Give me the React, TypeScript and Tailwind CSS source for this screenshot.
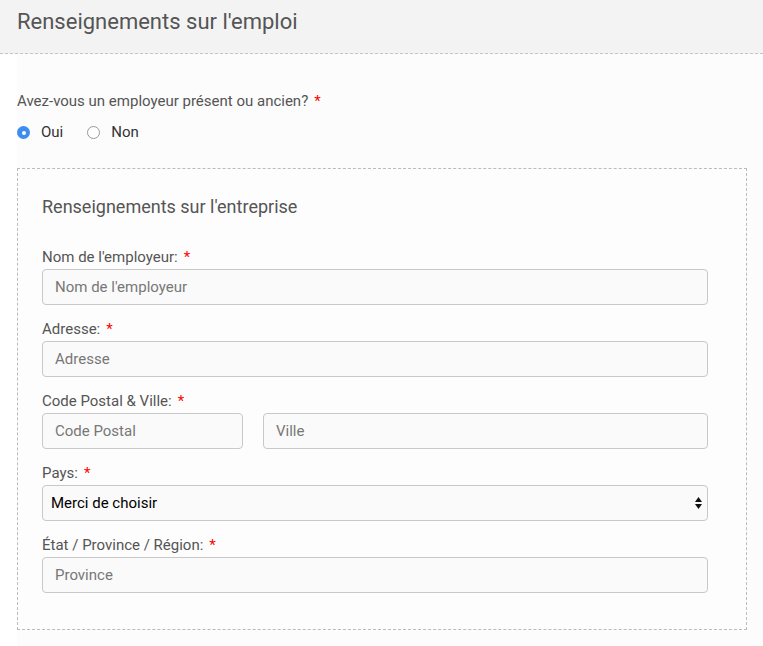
import { useState } from 'react'

const fieldCls =
  'w-full h-[36px] rounded-[4px] border border-[#c8c8c8] bg-[#fafafa] px-3 text-[15px] text-[#333] placeholder:text-[#777] focus:outline-none'

function Label({ text }: { text: string }) {
  return (
    <label className="block text-[15px] leading-[17px] text-[#555] mb-[3px]">
      {text}
      <span className="text-[#ff0000] ml-[6px]">*</span>
    </label>
  )
}

function Radio({ checked, label, onClick }: { checked: boolean; label: string; onClick: () => void }) {
  return (
    <button type="button" onClick={onClick} className="flex items-center gap-[11px] text-[15px] text-[#333]">
      {checked ? (
        <span className="w-[13px] h-[13px] rounded-full bg-[#3b8ef0] flex items-center justify-center">
          <span className="w-[4px] h-[4px] rounded-full bg-white" />
        </span>
      ) : (
        <span className="w-[13px] h-[13px] rounded-full border border-[#999] bg-white" />
      )}
      {label}
    </button>
  )
}

export default function App() {
  const [hasEmployer, setHasEmployer] = useState(true)

  return (
    <div className="min-h-[646px] bg-white" style={{ fontFamily: 'Roboto, "Liberation Sans", sans-serif' }}>
      <div className="h-[54px] bg-[#f3f3f3] border-b border-dashed border-[#c4c4c4] pl-[17px] pt-[9px]">
        <h1 className="text-[22px] leading-[26px] text-[#555]">Renseignements sur l'emploi</h1>
      </div>

      <div className="ml-[17px] bg-[#fcfcfc] pt-[39px] pb-[20px] pr-[16px]">
        <p className="text-[15px] leading-[17px] text-[#555]">
          Avez-vous un employeur présent ou ancien?
          <span className="text-[#ff0000] ml-[6px]">*</span>
        </p>
        <div className="flex items-center gap-[24px] mt-[14px] h-[17px]">
          <Radio checked={hasEmployer} label="Oui" onClick={() => setHasEmployer(true)} />
          <Radio checked={!hasEmployer} label="Non" onClick={() => setHasEmployer(false)} />
        </div>

        <div className="mt-[27px] border border-dashed border-[#bbb] bg-[#fdfdfd] pl-[24px] pr-[38px] pt-[26px] pb-[36px]">
          <h2 className="text-[18px] leading-[24px] text-[#555] mb-[30px]">Renseignements sur l'entreprise</h2>

          <div className="flex flex-col gap-[16px]">
            <div>
              <Label text="Nom de l'employeur:" />
              <input className={fieldCls} placeholder="Nom de l'employeur" />
            </div>
            <div>
              <Label text="Adresse:" />
              <input className={fieldCls} placeholder="Adresse" />
            </div>
            <div>
              <Label text="Code Postal & Ville:" />
              <div className="flex gap-[20px]">
                <input className={`${fieldCls} !w-[201px] shrink-0`} placeholder="Code Postal" />
                <input className={`${fieldCls} flex-1`} placeholder="Ville" />
              </div>
            </div>
            <div>
              <Label text="Pays:" />
              <div className="relative">
                <select className={`${fieldCls} appearance-none !text-black !pl-[8px]`} defaultValue="">
                  <option value="">Merci de choisir</option>
                  <option value="ca">Canada</option>
                  <option value="fr">France</option>
                </select>
                <svg
                  className="absolute right-[5px] top-[11px] pointer-events-none"
                  width="9"
                  height="14"
                  viewBox="0 0 9 14"
                >
                  <path d="M4.5 1 L8 6 L1 6 Z" fill="#111" />
                  <path d="M1 8 L8 8 L4.5 13 Z" fill="#111" />
                </svg>
              </div>
            </div>
            <div>
              <Label text="État / Province / Région:" />
              <input className={fieldCls} placeholder="Province" />
            </div>
          </div>
        </div>
      </div>
    </div>
  )
}
